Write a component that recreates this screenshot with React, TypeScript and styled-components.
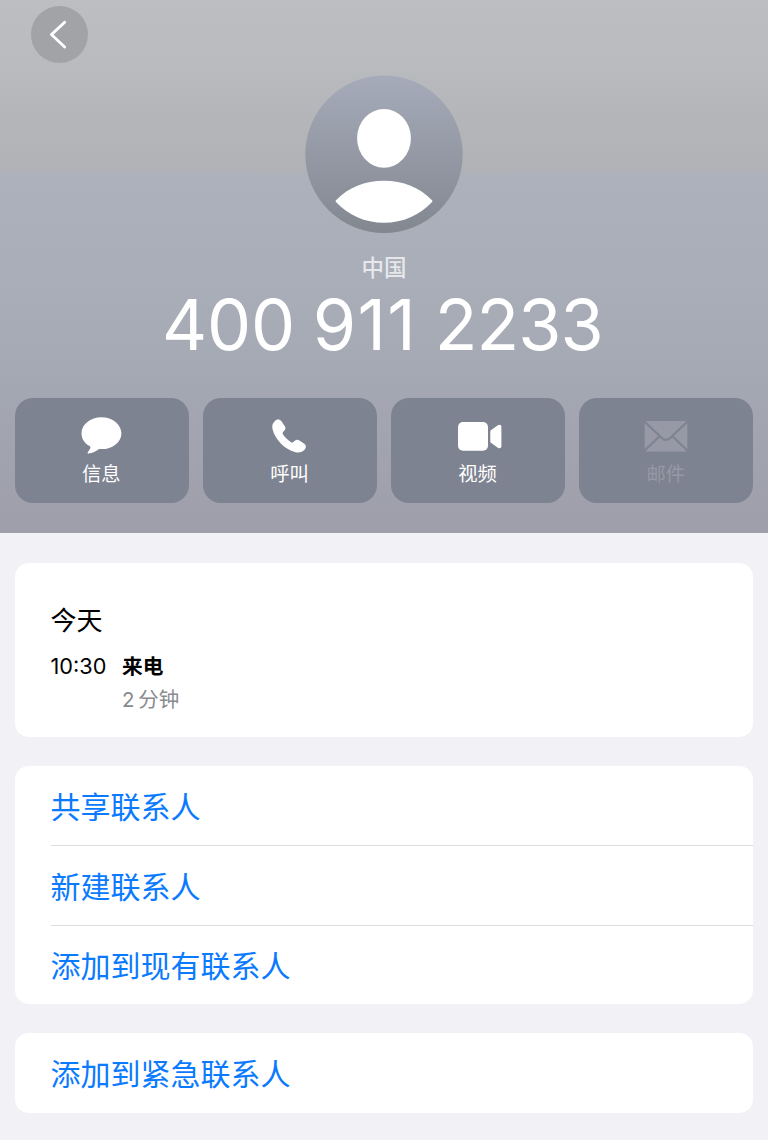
import React from "react";
import styled, { createGlobalStyle } from "styled-components";

const GlobalStyle = createGlobalStyle`
  * { box-sizing: border-box; }
  body {
    margin: 0;
    background: #fff;
    font-family: Inter, "Noto Sans CJK SC", sans-serif;
    -webkit-font-smoothing: antialiased;
  }
  button { font: inherit; border: 0; padding: 0; }
`;

const Page = styled.div`
  width: 768px;
  height: 1140px;
  background: #f2f1f6;
  overflow: hidden;
`;

const Hero = styled.header`
  height: 532.5px;
  padding: 6px 15px 0;
  display: flex;
  flex-direction: column;
  align-items: center;
  background: linear-gradient(
    180deg,
    #bdbec2 0px,
    #babbbf 60px,
    #b5b6ba 110px,
    #b2b4b7 145px,
    #b1b2b5 168px,
    #adb1bc 176px,
    #abb0ba 215px,
    #a9adb8 290px,
    #a5a9b4 370px,
    #a1a3af 450px,
    #9f9fab 532px
  );
`;

const BackButton = styled.button`
  align-self: flex-start;
  width: 57px;
  height: 57px;
  margin-left: 16px;
  border-radius: 50%;
  background: #a2a3a7;
  display: block;
  flex: none;
`;

const BackIcon = styled.svg`
  display: block;
  width: 57px;
  height: 57px;
`;

const Avatar = styled.svg`
  display: block;
  width: 158px;
  height: 158px;
  margin-top: 12px;
  flex: none;
`;

const Region = styled.div`
  margin-top: 19px;
  height: 32px;
  line-height: 32px;
  font-size: 22.5px;
  font-weight: 500;
  color: #e6e7ea;
`;

const PhoneNumber = styled.h1`
  margin: 0;
  height: 80px;
  padding: 1px 3px 0 0;
  line-height: 80px;
  font-size: 70px;
  font-weight: 400;
  word-spacing: -2px;
  color: #fff;
  white-space: nowrap;
`;

const DigitGroup = styled.span<{ $tracking: number }>`
  letter-spacing: ${(p) => p.$tracking}px;
`;

const Actions = styled.div`
  width: 100%;
  margin-top: 34px;
  display: grid;
  grid-template-columns: repeat(4, 1fr);
  gap: 14.5px;
`;

const ActionButton = styled.button<{ $disabled?: boolean }>`
  height: 104.5px;
  padding-top: 15px;
  border-radius: 18px;
  background: #7e8391;
  color: ${(p) => (p.$disabled ? "#9799a6" : "#fff")};
  display: flex;
  flex-direction: column;
  align-items: center;
  justify-content: flex-start;
`;

const ActionIcon = styled.svg`
  display: block;
  width: 48px;
  height: 44px;
  fill: currentColor;
`;

const ActionLabel = styled.span`
  height: 34px;
  line-height: 34px;
  margin-right: 1px;
  font-size: 19.3px;
`;

const Content = styled.main`
  padding: 30.5px 15px 0;
  display: flex;
  flex-direction: column;
  gap: 29px;
`;

const Card = styled.section`
  background: #fff;
  border-radius: 14px;
  overflow: hidden;
  padding-left: 35.5px;
`;

const HistoryCard = styled(Card)`
  height: 174px;
  padding-top: 38px;
`;

const Day = styled.h2`
  margin: 0;
  height: 40px;
  line-height: 40px;
  font-size: 26px;
  font-weight: 400;
  color: #000;
`;

const Call = styled.div`
  display: grid;
  grid-template-columns: 71.5px auto;
  margin-top: 9px;
  line-height: 33px;
`;

const Time = styled.time`
  font-size: 21.7px;
  color: #000;
`;

const CallKind = styled.div`
  font-size: 20.7px;
  font-weight: 700;
  color: #000;
`;

const Duration = styled.div`
  grid-column: 2;
  font-size: 20.5px;
  word-spacing: -2px;
  color: #8a8a8e;
`;

const LinkRow = styled.button`
  display: flex;
  align-items: center;
  width: 100%;
  height: 79.4px;
  padding-bottom: 2px;
  background: none;
  color: #0a7aff;
  font-size: 30px;
  & + & {
    border-top: 1.4px solid #dedee0;
  }
`;

const actions = [
  {
    label: "信息",
    icon: (
      <path d="M23.500 4.300C12.500 4.300 3.500 11.500 3.500 20.400c0 5.400 3.100 9.900 8.100 12.600.9.600 1 1.300.5 2.400-.6 1.300-1.300 2.200-2.200 3.500-.6.900-.2 1.700.8 1.600 3.500-.2 6.600-1.800 9.600-3.900.7-.4 1.600-.500 3.200-.500 11.200 0 19.900-7.100 19.900-15.700S34.700 4.300 23.500 4.300Z" />
    ),
  },
  {
    label: "呼叫",
    icon: (
      <path d="M9 7.900c2-1.900 4.700-2 6.300.2l3.400 4.900c1.100 1.600 1 3.300-.3 4.600l-1.300 1.500c-.6.7-.6 1.400-.2 2.200 1.900 3.100 4.900 5.900 8.200 7.900.8.500 1.500.4 2.200-.2l1.500-1.300c1.400-1.200 3-1.400 4.600-.3l4.900 3.300c2 1.400 2.100 3.700.6 5.500-2.300 2.700-5.400 3.900-9.200 3C19.200 37 8.900 26.500 6.500 16c-.8-3.300.1-6 2.500-8.100Z" />
    ),
  },
  {
    label: "视频",
    icon: (
      <>
        <rect x="4" y="9" width="30" height="28.800" rx="5" />
        <path d="M36.300 18.700c0-.8.300-1.300.9-1.800l6.700-4.600c1.900-1.200 3.500-.5 3.500 1.400v19.600c0 1.900-1.600 2.600-3.500 1.400L37.200 30c-.6-.5-.9-1-.9-1.800Z" />
      </>
    ),
  },
  {
    label: "邮件",
    disabled: true,
    icon: (
      <>
        <rect x="2.700" y="8" width="42.600" height="30.400" rx="2" />
        <path
          d="M2.500 8.500 19.800 25c2.800 2.600 5.600 2.600 8.400 0L45.500 8.500M2.500 37.800 17.800 23M45.500 37.800 30.200 23"
          fill="none"
          stroke="#7e8391"
          strokeWidth="2.200"
        />
      </>
    ),
  },
];

const contactLinks = ["共享联系人", "新建联系人", "添加到现有联系人"];

export default function App() {
  return (
    <Page lang="zh-CN">
      <GlobalStyle />
      <Hero>
        <BackButton aria-label="返回">
          <BackIcon viewBox="0 0 57 57">
            <path
              d="M33.700 16.300 20.400 28.600 33.700 41"
              fill="none"
              stroke="#fff"
              strokeWidth="2.800"
              strokeLinecap="round"
              strokeLinejoin="round"
            />
          </BackIcon>
        </BackButton>
        <Avatar viewBox="0 0 158 158">
          <defs>
            <linearGradient id="avatar" x1="0" y1="0" x2="0" y2="1">
              <stop offset="0" stopColor="#a5abb9" />
              <stop offset="0.500" stopColor="#9499a5" />
              <stop offset="1" stopColor="#828790" />
            </linearGradient>
          </defs>
          <circle cx="79" cy="79.300" r="78.700" fill="url(#avatar)" />
          <ellipse cx="79" cy="63.300" rx="26.900" ry="29.400" fill="#fff" />
          <path
            d="M31.200 125C43 112.500 60 105.700 79 105.700s36 6.800 47.800 19.300c.8.800.8 1.400 0 2.200C115 140 98 147.700 79 147.700s-36-7.700-47.800-20.500c-.8-.8-.8-1.400 0-2.200Z"
            fill="#fff"
          />
        </Avatar>
        <Region>中国</Region>
        <PhoneNumber>
          <DigitGroup $tracking={-0.2}>400</DigitGroup>{" "}
          <DigitGroup $tracking={1.3}>911</DigitGroup>{" "}
          <DigitGroup $tracking={-0.9}>2233</DigitGroup>
        </PhoneNumber>
        <Actions>
          {actions.map((a) => (
            <ActionButton key={a.label} $disabled={a.disabled}>
              <ActionIcon viewBox="0 0 48 44">{a.icon}</ActionIcon>
              <ActionLabel>{a.label}</ActionLabel>
            </ActionButton>
          ))}
        </Actions>
      </Hero>
      <Content>
        <HistoryCard>
          <Day>今天</Day>
          <Call>
            <Time>10:30</Time>
            <CallKind>来电</CallKind>
            <Duration>2 分钟</Duration>
          </Call>
        </HistoryCard>
        <Card>
          {contactLinks.map((label) => (
            <LinkRow key={label}>{label}</LinkRow>
          ))}
        </Card>
        <Card>
          <LinkRow>添加到紧急联系人</LinkRow>
        </Card>
      </Content>
    </Page>
  );
}
